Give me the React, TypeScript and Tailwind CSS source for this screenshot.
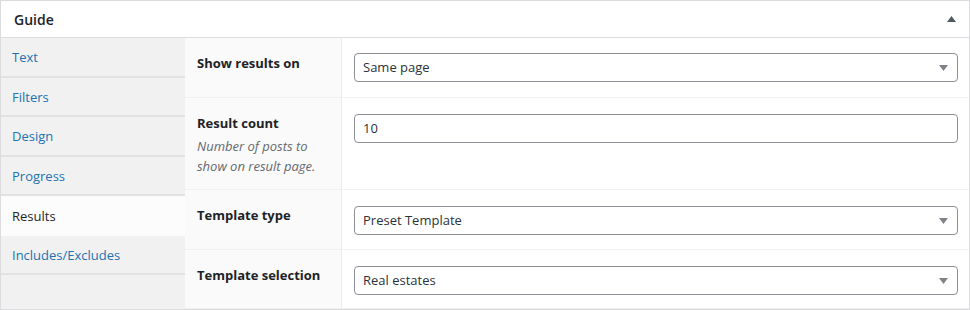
import React from "react";

const tabs = ["Text", "Filters", "Design", "Progress", "Results", "Includes/Excludes"];
const active = "Results";

const SelectBox: React.FC<{ value: string }> = ({ value }) => (
  <div className="h-[29px] rounded-[4px] border border-[#8c8f94] bg-white flex items-center justify-between pl-[8px] pr-[9px] text-[13px] text-[#2c3338]">
    <span>{value}</span>
    <svg width="9" height="6" viewBox="0 0 9 6">
      <path d="M0 0h9L4.5 6z" fill="#7e8389" />
    </svg>
  </div>
);

const App: React.FC = () => {
  return (
    <div
      className="w-[970px] h-[310px] bg-white overflow-hidden"
      style={{ fontFamily: '"Open Sans", "Noto Sans", sans-serif' }}
    >
      <div className="h-full border border-[#dcdcde] flex flex-col">
        {/* Header */}
        <div className="h-[37px] shrink-0 border-b border-[#dcdcde] flex items-center justify-between pl-[13px] pr-[13px]">
          <h2 className="text-[14px] font-semibold text-[#1d2327]">Guide</h2>
          <svg width="9" height="6" viewBox="0 0 9 6">
            <path d="M0 6h9L4.5 0z" fill="#50575e" />
          </svg>
        </div>

        <div className="flex flex-1 min-h-0">
          {/* Tabs */}
          <div className="w-[184px] shrink-0 bg-[#f1f1f1]">
            {tabs.map((t) => (
              <div
                key={t}
                className={
                  t === active
                    ? "h-[39.5px] flex items-center pl-[11px] pt-[2px] text-[13px] bg-[#fcfcfc] text-[#1d2327]"
                    : "h-[39.5px] flex items-center pl-[11px] pt-[2px] text-[13px] text-[#2271b1] border-b-2 border-[#e2e2e2]"
                }
              >
                {t}
              </div>
            ))}
          </div>

          {/* Settings table */}
          <div className="flex-1 flex flex-col">
            <div className="flex h-[60px] border-b border-[#f0f0f1]">
              <div className="w-[157px] shrink-0 bg-[#fafafa] border-r border-[#ebebeb] pl-[12px] pr-[10px] pt-[15px] text-[13px] font-bold text-[#1d2327] leading-[20px]">
                Show results on
              </div>
              <div className="flex-1 pl-[12px] pr-[11px] pt-[15px]">
                <SelectBox value="Same page" />
              </div>
            </div>

            <div className="flex h-[92px] border-b border-[#f0f0f1]">
              <div className="w-[157px] shrink-0 bg-[#fafafa] border-r border-[#ebebeb] pl-[12px] pr-[14px] pt-[15px] leading-[20px]">
                <div className="text-[13px] font-bold text-[#1d2327]">Result count</div>
                <p className="mt-[3px] text-[13px] italic text-[#646970] leading-[20px]">
                  Number of posts to show on result page.
                </p>
              </div>
              <div className="flex-1 pl-[12px] pr-[11px] pt-[16px]">
                <div className="h-[29px] rounded-[4px] border border-[#8c8f94] bg-white flex items-center pl-[8px] text-[13px] text-[#2c3338]">
                  10
                </div>
              </div>
            </div>

            <div className="flex h-[60px] border-b border-[#f0f0f1]">
              <div className="w-[157px] shrink-0 bg-[#fafafa] border-r border-[#ebebeb] pl-[12px] pr-[10px] pt-[15px] text-[13px] font-bold text-[#1d2327] leading-[20px]">
                Template type
              </div>
              <div className="flex-1 pl-[12px] pr-[11px] pt-[16px]">
                <SelectBox value="Preset Template" />
              </div>
            </div>

            <div className="flex flex-1 border-b border-[#f0f0f1]">
              <div className="w-[157px] shrink-0 bg-[#fafafa] border-r border-[#ebebeb] pl-[12px] pr-[10px] pt-[15px] text-[13px] font-bold text-[#1d2327] leading-[20px]">
                Template selection
              </div>
              <div className="flex-1 pl-[12px] pr-[11px] pt-[16px]">
                <SelectBox value="Real estates" />
              </div>
            </div>
          </div>
        </div>
      </div>
    </div>
  );
};

export default App;
